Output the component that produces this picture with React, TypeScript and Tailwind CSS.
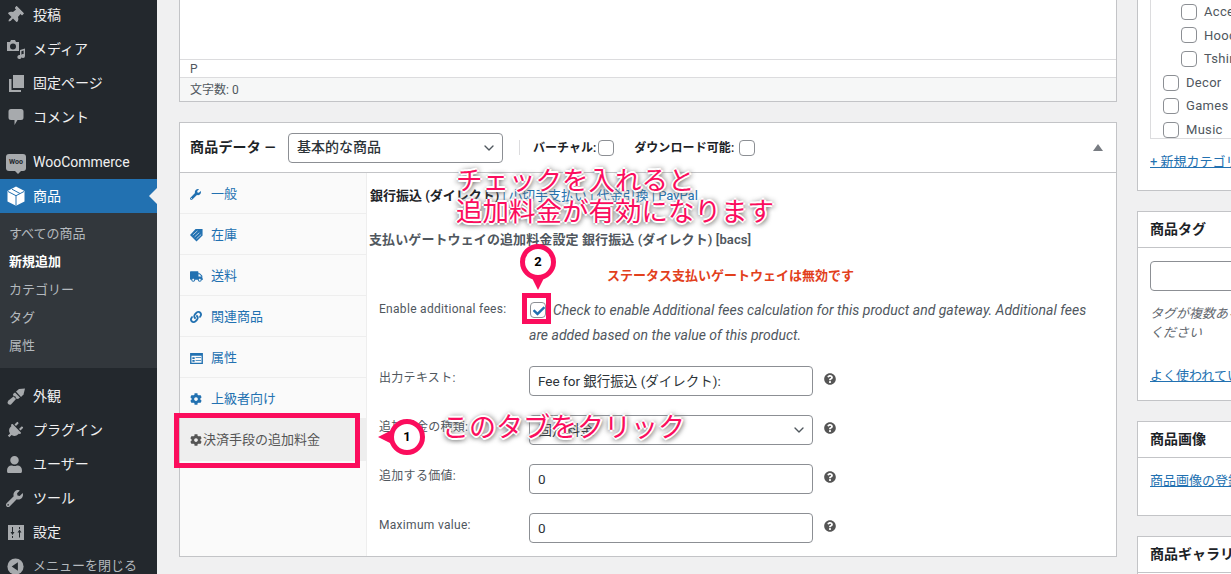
import { FaThumbtack, FaPlug, FaUser, FaWrench, FaCog, FaTruck, FaLink, FaQuestionCircle, FaCheck } from "react-icons/fa"
import { ChevronDown } from "lucide-react"
import type { ReactNode } from "react"

const jp = "font-['Roboto','Noto_Sans_CJK_JP',sans-serif]"

const MediaIcon = () => (
  <svg viewBox="0 0 20 20" className="w-[20px] h-[20px] fill-[#a7aaad]">
    <path d="M1 3h3l1-2h4l1 2h3v9H1z M7 4.500a3 3 0 1 0 0 6 3 3 0 0 0 0-6z" fillRule="evenodd" />
    <path d="M14 11l5-1.500V17a2 2 0 1 1-1.400-1.900v-3.600l-2.200.7V18a2 2 0 1 1-1.400-1.900z" />
  </svg>
)

const PagesIcon = () => (
  <svg viewBox="0 0 20 20" className="w-[20px] h-[20px] fill-[#a7aaad]">
    <path d="M7 2h11v13H7z" />
    <path d="M3 6h2.500v11H15v2H3z" />
  </svg>
)

const SlidersIcon = () => (
  <svg viewBox="0 0 20 20" className="w-[20px] h-[20px] fill-[#a7aaad]">
    <path fillRule="evenodd" d="M2 3h16v15H2z M6 5v5H4.500l2 3 2-3H7V5z M6 14v2h1v-2z M13 5v2h1V5z M13.500 7.500l-2 3H13v5h1v-5h1.500z" />
  </svg>
)

const CommentIcon = () => (
  <svg viewBox="0 0 20 20" className="w-[20px] h-[20px] fill-[#a7aaad]">
    <path d="M5 2h10a2.500 2.500 0 0 1 2.500 2.500v6A2.500 2.500 0 0 1 15 13h-3.500l-3 5v-5H5a2.500 2.500 0 0 1-2.500-2.500v-6A2.500 2.500 0 0 1 5 2z" />
  </svg>
)

const BrushIcon = () => (
  <svg viewBox="0 0 20 20" className="w-[20px] h-[20px] fill-[#a7aaad]">
    <path d="M10 5.500L13 3l6-.5-1.500 6L15 11z" />
    <path d="M9 6.500l5 5-2 1.500-2-.5-.5-2-2-.5-.5-2z" />
    <path d="M7.500 10.500l2.500 2.500-5 5.500q-2.500.8-3.500-1.500 0-1.500 1-2.500z" />
  </svg>
)

const BoxIcon = () => (
  <svg viewBox="0 0 20 20" className="w-[20px] h-[20px]">
    <path d="M10 .5L18.500 5v10.500L10 19.800 1.500 15.500V5z" fill="#fff" />
    <path d="M2 5.500l8 4.200 8-4.200 M10 9.700V19.500 M6 3.200l8 4.300" fill="none" stroke="#2271b1" strokeWidth="1" />
  </svg>
)

const CollapseIcon = () => (
  <svg viewBox="0 0 20 20" className="w-[19px] h-[19px]">
    <circle cx="10" cy="10" r="8.500" fill="#a7aaad" />
    <path d="M12.500 5.500v9L6 10z" fill="#23282d" />
  </svg>
)

const TagIcon = () => (
  <svg viewBox="0 0 14 14" className="w-[13px] h-[13px]">
    <path d="M6 0h7.500v7L7 13.500 0 6.500z" fill="#2271b1" />
    <path d="M3 6.500L8 2 M5 8.500L10 4 M7 10.500L12 6" stroke="#fafafa" strokeWidth=".7" />
  </svg>
)

const WooIcon = () => (
  <div className="w-[20px] h-[17px] rounded-[3px] bg-[#a7aaad] flex items-center justify-center text-[7px] font-bold text-[#23282d] relative">
    Woo
    <span className="absolute -bottom-[3px] left-[9px] w-0 h-0 border-l-[3px] border-r-[3px] border-t-[3px] border-l-transparent border-r-transparent border-t-[#a7aaad]" />
  </div>
)

const ListIcon = () => (
  <svg viewBox="0 0 14 12" className="w-[13px] h-[11px] fill-[#2271b1]">
    <path fillRule="evenodd" d="M0 0h14v12H0z M1.500 3v7.500h11V3z" />
    <path d="M2.500 4.500h2.500v2H2.500z M6 4.500h6v1H6z M2.500 7.500h2.500v2H2.500z M6 7.500h6v1H6z" />
  </svg>
)

const MenuItem = ({ icon, label, active }: { icon: ReactNode; label: string; active?: boolean }) => (
  <div className={`relative h-[34px] flex items-center text-[14px] ${active ? "bg-[#2271b1] text-white" : "text-[#f0f0f1]"}`}>
    <span className="w-[33px] pl-[6px] flex justify-start shrink-0">{icon}</span>
    <span>{label}</span>
    {active && <span className="absolute right-0 top-[9px] w-0 h-0 border-y-[8px] border-r-[8px] border-y-transparent border-r-[#f0f0f1]" />}
  </div>
)

const Sidebar = () => {
  const ic = "text-[#a7aaad] text-[17px]"
  return (
    <aside className="w-[157px] shrink-0 h-[574px] bg-[#23282d] overflow-hidden">
      <div className="-mt-[2px]">
        <MenuItem icon={<FaThumbtack className={`${ic} rotate-45`} />} label="投稿" />
        <MenuItem icon={<MediaIcon />} label="メディア" />
        <MenuItem icon={<PagesIcon />} label="固定ページ" />
        <MenuItem icon={<CommentIcon />} label="コメント" />
        <div className="h-[11px]" />
        <MenuItem icon={<WooIcon />} label="WooCommerce" />
        <MenuItem icon={<BoxIcon />} label="商品" active />
        <div className="bg-[#32373c] pt-[7px] pb-[8px] text-[13px] text-[#b4b9be]">
          <div className="h-[28px] pl-[9px] flex items-center">すべての商品</div>
          <div className="h-[28px] pl-[9px] flex items-center text-white font-semibold">新規追加</div>
          <div className="h-[28px] pl-[9px] flex items-center">カテゴリー</div>
          <div className="h-[28px] pl-[9px] flex items-center">タグ</div>
          <div className="h-[28px] pl-[9px] flex items-center">属性</div>
        </div>
        <div className="h-[11px]" />
        <MenuItem icon={<BrushIcon />} label="外観" />
        <MenuItem icon={<FaPlug className={`${ic} rotate-45`} />} label="プラグイン" />
        <MenuItem icon={<FaUser className={ic} />} label="ユーザー" />
        <MenuItem icon={<FaWrench className={ic} />} label="ツール" />
        <MenuItem icon={<SlidersIcon />} label="設定" />
        <div className="h-[34px] flex items-center text-[13px] text-[#b4b9be]">
          <span className="w-[33px] pl-[6px] shrink-0"><CollapseIcon /></span>
          メニューを閉じる
        </div>
      </div>
    </aside>
  )
}

const Tab = ({ icon, label }: { icon: ReactNode; label: string }) => (
  <div className="h-[41px] border-b border-[#eeeeee] flex items-center pl-[10px] pt-[2px] text-[13px] text-[#2271b1]">
    <span className="w-[21px] shrink-0">{icon}</span>
    {label}
  </div>
)

const Help = () => <FaQuestionCircle className="text-[#555555] text-[12px] ml-[11px] mb-[4px]" />

const Field = ({ label, children, className }: { label: string; children: ReactNode; className: string }) => (
  <div className={`flex items-center ${className}`}>
    <label className="w-[162px] pl-[12px] mb-[6px] text-[12px] text-[#50575e] tracking-[0.3px]">{label}</label>
    {children}
    <Help />
  </div>
)

const Input = ({ value }: { value: string }) => (
  <div className="w-[284px] h-[30px] border border-[#8c8f94] rounded-[4px] bg-white px-[8px] flex items-center text-[13.5px] text-[#2c3338]">{value}</div>
)

const Check = () => <span className="inline-block w-[16px] h-[16px] rounded-[4px] border border-[#8c8f94] bg-white shrink-0" />

const ProductData = () => (
  <section className="mt-[20px] h-[435px] bg-white border border-[#c3c4c7] flex flex-col">
    <header className="h-[50px] shrink-0 border-b border-[#c3c4c7] flex items-center pl-[10px] pr-[13px]">
      <span className="text-[14px] font-semibold text-[#1d2327] w-[98px] tracking-[0.2px]">商品データ —</span>
      <div className="w-[215px] h-[30px] border border-[#8c8f94] rounded-[4px] flex items-center justify-between pl-[8px] pr-[5px] text-[14px] font-medium text-[#2c3338]">
        基本的な商品
        <ChevronDown size={16} className="text-[#50575e]" />
      </div>
      <span className="w-px h-[15px] bg-[#dcdcde] ml-[16px] mr-[13px]" />
      <span className="text-[12px] font-semibold text-[#1d2327] flex items-center gap-[2px]">バーチャル:<Check /></span>
      <span className="text-[12px] font-semibold text-[#1d2327] flex items-center gap-[5px] ml-[20px] tracking-[0.1px]">ダウンロード可能:<Check /></span>
      <span className="ml-auto w-0 h-0 border-x-[5px] border-b-[7px] border-x-transparent border-b-[#787c82]" />
    </header>
    <div className="flex flex-1 min-h-0">
      <nav className="w-[187px] shrink-0 bg-[#fafafa] border-r border-[#eeeeee]">
        <Tab icon={<FaWrench className="text-[11px]" />} label="一般" />
        <Tab icon={<TagIcon />} label="在庫" />
        <Tab icon={<FaTruck className="text-[13px]" />} label="送料" />
        <Tab icon={<FaLink className="text-[12px]" />} label="関連商品" />
        <Tab icon={<ListIcon />} label="属性" />
        <Tab icon={<FaCog className="text-[12px]" />} label="上級者向け" />
        <div className="h-[42px] bg-[#eeeeee] flex items-center pl-[10px] text-[13px] text-[#555555]">
          <FaCog className="text-[12px] mr-[1px]" />
          決済手段の追加料金
        </div>
      </nav>
      <div className="flex-1 min-w-0">
        <div className="pt-[13px] pl-[3px] h-[42px] text-[13px] font-semibold text-[#1d2327] whitespace-nowrap">
          銀行振込 (ダイレクト) <span className="font-normal text-[#2271b1]">| 小切手支払い | 代金引換 | PayPal</span>
        </div>
        <h3 className="pt-[15px] pl-[2px] text-[13px] font-semibold text-[#50575e] tracking-[0.1px]">支払いゲートウェイの追加料金設定 銀行振込 (ダイレクト) [bacs]</h3>
        <p className="mt-[16px] pl-[240px] text-[13px] font-semibold text-[#e2401c]">ステータス支払いゲートウェイは無効です</p>
        <div className="mt-[13px] flex">
          <label className="w-[162px] pl-[12px] pt-[2px] text-[12px] text-[#50575e] tracking-[0.3px] shrink-0">Enable additional fees:</label>
          <p className="w-[565px] text-[14px] italic text-[#50575e] leading-[25px]">
            <span className="inline-block w-[16px] h-[16px] rounded-[4px] border border-[#8c8f94] bg-white align-[-3px] mr-[7px] ml-px relative">
              <FaCheck className="absolute left-[1.5px] top-[1.5px] text-[12px] text-[#2271b1]" />
            </span>
            Check to enable Additional fees calculation for this product and gateway. Additional fees are added based on the value of this product.
          </p>
        </div>
        <Field label="出力テキスト:" className="mt-[18px]"><Input value="Fee for 銀行振込 (ダイレクト):" /></Field>
        <Field label="追加料金の種類:" className="mt-[19px]">
          <div className="w-[284px] h-[30px] border border-[#8c8f94] rounded-[4px] bg-white pl-[8px] pr-[5px] flex items-center justify-between text-[14px] text-[#2c3338]">
            固定料金
            <ChevronDown size={16} className="text-[#50575e]" />
          </div>
        </Field>
        <Field label="追加する価値:" className="mt-[19px]"><Input value="0" /></Field>
        <Field label="Maximum value:" className="mt-[19px]"><Input value="0" /></Field>
      </div>
    </div>
  </section>
)

const Box = ({ title, children, className }: { title: string; children: ReactNode; className?: string }) => (
  <section className={`mt-[20px] bg-white border border-[#c3c4c7] ${className ?? ""}`}>
    <h2 className="h-[36px] border-b border-[#c3c4c7] flex items-center pl-[12px] text-[14px] font-semibold text-[#1d2327] whitespace-nowrap">{title}</h2>
    {children}
  </section>
)

const Cat = ({ label, indent }: { label: string; indent?: boolean }) => (
  <div className={`h-[23.6px] shrink-0 flex items-center gap-[7px] text-[13px] tracking-[0.3px] text-[#50575e] whitespace-nowrap ${indent ? "pl-[30px]" : "pl-[12px]"}`}>
    <Check />
    {label}
  </div>
)

const RightColumn = () => (
  <aside className="w-[280px] shrink-0">
    <section className="h-[191px] bg-white border border-[#c3c4c7] border-t-0 pl-[12px] flex flex-col">
      <div className="h-[139px] shrink-0 border-l border-b border-[#dcdcde] overflow-hidden">
        <Cat label="Accessories" indent />
        <Cat label="Hoodies" indent />
        <Cat label="Tshirts" indent />
        <Cat label="Decor" />
        <Cat label="Games" />
        <Cat label="Music" />
      </div>
      <a className="mt-[13px] text-[13px] text-[#2271b1] underline whitespace-nowrap">+ 新規カテゴリーを追加</a>
    </section>
    <Box title="商品タグ" className="h-[190px]">
      <div className="px-[12px] pt-[13px]">
        <div className="h-[30px] border border-[#8c8f94] rounded-[4px] w-[180px]" />
        <p className="mt-[13px] text-[13px] italic leading-[19px] text-[#646970] whitespace-nowrap">タグが複数ある場合はコンマで区切って<br />ください</p>
        <a className="block mt-[24px] text-[13px] text-[#2271b1] underline whitespace-nowrap">よく使われているタグから選択</a>
      </div>
    </Box>
    <Box title="商品画像" className="h-[95px]">
      <a className="block pl-[12px] pt-[13px] text-[13px] text-[#2271b1] underline whitespace-nowrap">商品画像の登録</a>
    </Box>
    <Box title="商品ギャラリー" className="h-[60px]"><span /></Box>
  </aside>
)

const annot = "text-[#fb0d5d] whitespace-nowrap [text-shadow:-2px_0_0_#fff,2px_0_0_#fff,0_-2px_0_#fff,0_2px_0_#fff,2px_2px_5px_#666,-2px_2px_5px_#666,2px_-2px_5px_#999]"

const Annotations = () => (
  <>
    <div className={`absolute left-[456px] top-[165px] text-[26.5px] leading-[31px] ${annot}`}>チェックを入れると<br />追加料金が有効になります</div>
    <div className={`absolute left-[442px] top-[412px] text-[27px] leading-[32px] ${annot}`}>このタブをクリック</div>
    <div className="absolute left-[174px] top-[413px] w-[186px] h-[55px] border-[5px] border-[#fb0d5d]" />
    <div className="absolute left-[522px] top-[293px] w-[29px] h-[31px] border-[5px] border-[#fb0d5d]" />
    <div className="absolute left-[520px] top-[244px] w-[36px] h-[36px] rounded-full bg-white border-[5px] border-[#fb0d5d] flex items-center justify-center text-[13px] font-bold text-black">2</div>
    <span className="absolute left-[531px] top-[276px] w-0 h-0 border-x-[7px] border-t-[14px] border-x-transparent border-t-[#fb0d5d]" />
    <div className="absolute left-[389px] top-[419px] w-[36px] h-[36px] rounded-full bg-white border-[5px] border-[#fb0d5d] flex items-center justify-center text-[13px] font-bold text-black">1</div>
    <span className="absolute left-[378px] top-[430px] w-0 h-0 border-y-[7px] border-r-[14px] border-y-transparent border-r-[#fb0d5d]" />
  </>
)

const App = () => (
  <div className={`relative w-[1231px] h-[574px] overflow-hidden bg-[#f0f0f1] flex ${jp}`}>
    <Sidebar />
    <main className="pl-[22px] flex gap-[20px] items-start">
      <div className="w-[938px] shrink-0">
        <section className="h-[102px] bg-white border border-[#c3c4c7] border-t-0 flex flex-col">
          <div className="flex-1 border-b border-[#dcdcde]" />
          <div className="h-[18px] pl-[10px] text-[12px] text-[#50575e] flex items-center border-b border-[#dcdcde]">P</div>
          <div className="h-[23px] pl-[10px] bg-[#f6f7f7] text-[12px] text-[#50575e] flex items-center">文字数: 0</div>
        </section>
        <ProductData />
      </div>
      <RightColumn />
    </main>
    <Annotations />
  </div>
)

export default App
